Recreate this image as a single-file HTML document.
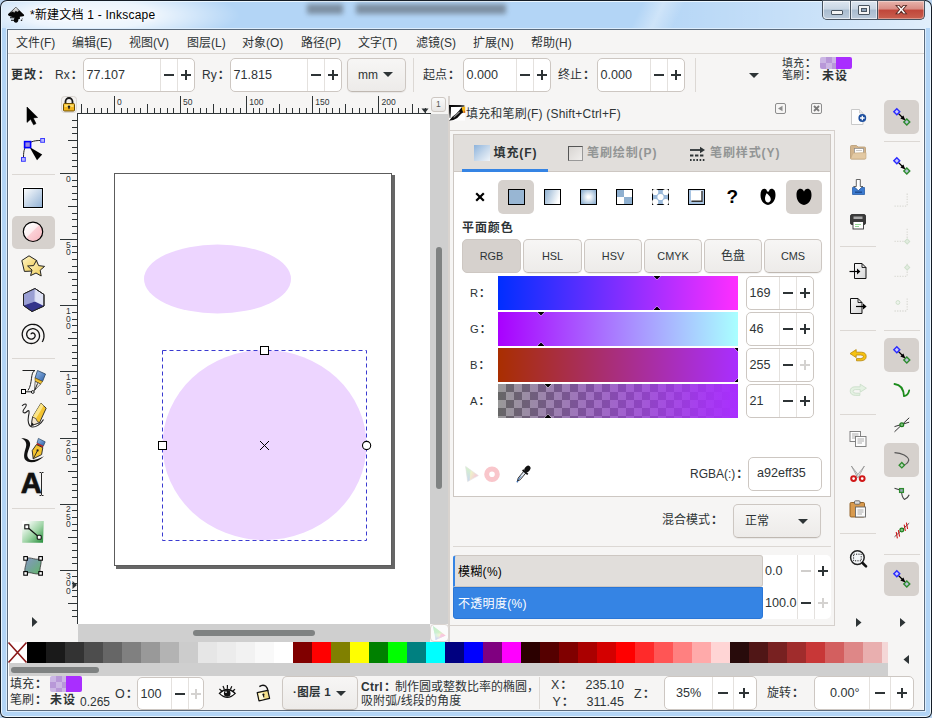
<!DOCTYPE html><html lang="zh-CN"><head><meta charset="utf-8"><title>*新建文档 1 - Inkscape</title><style>
*{box-sizing:border-box;margin:0;padding:0}
html,body{width:932px;height:718px;overflow:hidden}
body{position:relative;background:#b9d3ee;font-family:"Liberation Sans","Noto Sans CJK SC",sans-serif;font-size:12px;color:#2e3436}
.a{position:absolute}
.t{position:absolute;white-space:nowrap;line-height:1}
.b{font-weight:bold;letter-spacing:.9px}
.spin{position:absolute;background:#fff;border:1px solid #cdc7c2;border-radius:5px}
.spin i{position:absolute;top:0;bottom:0;width:1px;background:#e4e1de}
.pm{position:absolute;background:#2e3436}
.btn{position:absolute;border:1px solid #cdc7c2;border-bottom-color:#bfb8b1;border-radius:5px;background:linear-gradient(#f7f6f5,#edebe9);box-shadow:0 1px 1px rgba(0,0,0,.06)}
.act{position:absolute;background:#d6d1cd;border-radius:5px}
.sep{position:absolute;background:#dcd8d4}
svg{position:absolute;overflow:visible}
.c{font-weight:bold;letter-spacing:0;padding-left:1px;margin-right:-1px}
</style></head><body>
<div class="a" style="left:0;top:0;width:932px;height:718px;border-radius:7px 7px 6px 6px;background:#141c26"></div>
<div class="a" style="left:1px;top:1px;width:930px;height:716px;border-radius:6px 6px 5px 5px;background:#eaf6ff"></div>
<div class="a" style="left:2px;top:2px;width:928px;height:714px;border-radius:5px 5px 4px 4px;background:#b3d5f6"></div>
<div class="a" style="left:2px;top:2px;width:260px;height:26px;border-radius:5px 0 0 0;background:radial-gradient(ellipse 150px 30px at 88px 13px,rgba(255,255,255,.9) 0,rgba(255,255,255,.75) 45%,rgba(255,255,255,0) 100%)"></div>
<div class="a" style="left:307px;top:4px;width:36px;height:10px;background:#66727f;filter:blur(2.5px);opacity:.7"></div>
<div class="a" style="left:356px;top:4px;width:150px;height:10px;background:#66727f;filter:blur(2.5px);opacity:.7"></div>
<div class="a" style="left:600px;top:2px;width:130px;height:26px;background:linear-gradient(115deg,rgba(255,255,255,0) 30%,rgba(255,255,255,.35) 45%,rgba(255,255,255,0) 60%)"></div>
<div class="a" style="left:640px;top:2px;width:290px;height:26px;border-radius:0 5px 0 0;background:linear-gradient(90deg,rgba(255,255,255,0),rgba(255,255,255,.3) 60%,rgba(255,255,255,.6))"></div>
<div class="a" style="left:6px;top:28px;width:920px;height:684px;background:#dcedfd"></div>
<div class="a" style="left:7px;top:29px;width:918px;height:682px;background:#5b6b7d"></div>
<div class="a" style="left:8px;top:30px;width:916px;height:680px;background:#fff"></div>
<div class="a" style="left:9px;top:30px;width:914px;height:680px;background:#f6f5f4"></div>
<svg style="left:4px;top:4px" width="24" height="24" viewBox="4 4 24 24"><defs><linearGradient id="sn" x1="0" y1="0" x2="0" y2="1"><stop offset="0" stop-color="#fff"/><stop offset="1" stop-color="#9a9a9a"/></linearGradient></defs><path d="M15.9 7 L24 14.7 Q24.6 15.8 23.2 16.2 L19.8 16.8 L20 18.8 L18.2 19.4 Q18.8 21.8 16.2 22.7 Q13.6 22.4 13.8 20.2 L14.4 17.4 L10.4 16.4 L8.4 15.4 Q7.5 14.6 8.4 13.8 Z" fill="#050505"/><path d="M15.9 7.6 L19 10.8 L17.2 12 L15.9 10.8 L14.2 12.8 L12.8 11.6 L10 13 Z" fill="url(#sn)"/><path d="M10 17.7H14.4M11 20.3H14" stroke="#050505" stroke-width="1.1"/><circle cx="21.5" cy="20.2" r=".8" fill="#111"/><circle cx="22.3" cy="18.8" r=".5" fill="#555"/></svg>
<div class="t" style="left:30px;top:8.5px;font-size:12px;color:#000;letter-spacing:.22px;text-shadow:0 0 6px #fff,0 0 6px #fff,0 0 3px #fff">*新建文档 1 - Inkscape</div>
<div class="a" style="left:822px;top:0;width:103px;height:20px;border:1px solid #46525f;border-top:none;border-radius:0 0 5px 5px;background:#46525f"></div>
<div class="a" style="left:823px;top:1px;width:27px;height:18px;border-radius:0 0 0 4px;background:linear-gradient(#dde6f0 0,#c8d5e3 45%,#a9bccf 50%,#bccbdb 100%);box-shadow:inset 0 0 0 1px rgba(255,255,255,.6)"></div>
<div class="a" style="left:851px;top:1px;width:26px;height:18px;background:linear-gradient(#dde6f0 0,#c8d5e3 45%,#a9bccf 50%,#bccbdb 100%);box-shadow:inset 0 0 0 1px rgba(255,255,255,.6)"></div>
<div class="a" style="left:878px;top:1px;width:46px;height:18px;border-radius:0 0 4px 0;background:linear-gradient(#e8b4ac 0,#d98c84 45%,#c0463a 50%,#c9604f 100%);box-shadow:inset 0 0 0 1px rgba(255,255,255,.35)"></div>
<div class="a" style="left:831px;top:10px;width:12px;height:5px;background:#f4f4f4;border:1px solid #4a5560;border-radius:1px"></div>
<div class="a" style="left:858px;top:5px;width:12px;height:10px;background:#f4f4f4;border:1px solid #4a5560;border-radius:1px"></div>
<div class="a" style="left:861px;top:8px;width:6px;height:4px;background:#8fa3b8;border:1px solid #4a5560"></div>
<svg style="left:895px;top:5.2px" width="12.5" height="9.3" viewBox="0 0 12 11" preserveAspectRatio="none"><path d="M1 0.5 L4 0.5 L6 3.3 L8 0.5 L11 0.5 L7.6 5.4 L11 10.5 L8 10.5 L6 7.5 L4 10.5 L1 10.5 L4.4 5.4 Z" fill="#fff" stroke="#5a2a24" stroke-width="1"/></svg>
<div class="t" style="left:16px;top:36.5px;font-size:12px;">文件(F)</div>
<div class="t" style="left:72px;top:36.5px;font-size:12px;">编辑(E)</div>
<div class="t" style="left:129px;top:36.5px;font-size:12px;">视图(V)</div>
<div class="t" style="left:187px;top:36.5px;font-size:12px;">图层(L)</div>
<div class="t" style="left:242px;top:36.5px;font-size:12px;">对象(O)</div>
<div class="t" style="left:301px;top:36.5px;font-size:12px;">路径(P)</div>
<div class="t" style="left:358px;top:36.5px;font-size:12px;">文字(T)</div>
<div class="t" style="left:416px;top:36.5px;font-size:12px;">滤镜(S)</div>
<div class="t" style="left:473px;top:36.5px;font-size:12px;">扩展(N)</div>
<div class="t" style="left:531px;top:36.5px;font-size:12px;">帮助(H)</div>
<div class="a" style="left:8px;top:53px;width:916px;height:1px;background:#dcd8d4"></div>
<div class="t b" style="left:11px;top:68.5px;font-size:12px;">更改<span class="c">：</span></div>
<div class="t" style="left:55px;top:68.5px;font-size:12px;">Rx<span class="c">：</span></div>
<div class="spin" style="left:83px;top:58px;width:112px;height:34px"><i style="left:76px"></i><i style="left:93px"></i></div>
<div class="t" style="left:86.5px;top:69.2px;font-size:12.6px;">77.107</div>
<div class="pm" style="left:164.0px;top:74.0px;width:10px;height:2px;background:#2e3436"></div>
<div class="pm" style="left:181.0px;top:74.0px;width:10px;height:2px;background:#2e3436"></div>
<div class="pm" style="left:185.0px;top:70.0px;width:2px;height:10px;background:#2e3436"></div>
<div class="t" style="left:202px;top:68.5px;font-size:12px;">Ry<span class="c">：</span></div>
<div class="spin" style="left:230px;top:58px;width:112px;height:34px"><i style="left:76px"></i><i style="left:93px"></i></div>
<div class="t" style="left:233.5px;top:69.2px;font-size:12.6px;">71.815</div>
<div class="pm" style="left:311.0px;top:74.0px;width:10px;height:2px;background:#2e3436"></div>
<div class="pm" style="left:328.0px;top:74.0px;width:10px;height:2px;background:#2e3436"></div>
<div class="pm" style="left:332.0px;top:70.0px;width:2px;height:10px;background:#2e3436"></div>
<div class="btn" style="left:346.5px;top:58px;width:59.5px;height:34px;"></div>
<div class="t" style="left:358px;top:68.5px;font-size:12px;">mm</div>
<svg style="left:383px;top:72px" width="10" height="5"><path d="M0 0H10L5 5Z" fill="#2e3436"/></svg>
<div class="a" style="left:413px;top:58px;width:1px;height:34px;background:#dcd8d4"></div>
<div class="t" style="left:423px;top:68.5px;font-size:12px;">起点<span class="c">：</span></div>
<div class="spin" style="left:463px;top:58px;width:88px;height:34px"><i style="left:52px"></i><i style="left:69px"></i></div>
<div class="t" style="left:466.5px;top:69.2px;font-size:12.6px;">0.000</div>
<div class="pm" style="left:520.0px;top:74.0px;width:10px;height:2px;background:#2e3436"></div>
<div class="pm" style="left:537.0px;top:74.0px;width:10px;height:2px;background:#2e3436"></div>
<div class="pm" style="left:541.0px;top:70.0px;width:2px;height:10px;background:#2e3436"></div>
<div class="t" style="left:558px;top:68.5px;font-size:12px;">终止<span class="c">：</span></div>
<div class="spin" style="left:597px;top:58px;width:88px;height:34px"><i style="left:52px"></i><i style="left:69px"></i></div>
<div class="t" style="left:600.5px;top:69.2px;font-size:12.6px;">0.000</div>
<div class="pm" style="left:654.0px;top:74.0px;width:10px;height:2px;background:#2e3436"></div>
<div class="pm" style="left:671.0px;top:74.0px;width:10px;height:2px;background:#2e3436"></div>
<div class="pm" style="left:675.0px;top:70.0px;width:2px;height:10px;background:#2e3436"></div>
<div class="a" style="left:695px;top:58px;width:1px;height:34px;background:#dcd8d4"></div>
<svg style="left:749px;top:73px" width="10" height="5"><path d="M0 0H10L5 5Z" fill="#2e3436"/></svg>
<div class="t" style="left:782px;top:58px;font-size:11px;">填充<span class="c">：</span></div>
<div class="t" style="left:782px;top:70px;font-size:11px;">笔刷<span class="c">：</span></div>
<div class="t b" style="left:822px;top:69.5px;font-size:12px;">未设</div>
<div class="a" style="left:820px;top:57px;width:16px;height:12px;background-color:#cbb6e4;background-image:linear-gradient(45deg,#b898d8 25%,transparent 25%,transparent 75%,#b898d8 75%),linear-gradient(45deg,#b898d8 25%,transparent 25%,transparent 75%,#b898d8 75%);background-size:12px 12px;background-position:0 0,6px 6px;border-radius:2px 0 0 2px"></div>
<div class="a" style="left:836px;top:57px;width:16px;height:12px;background:#a92eff;border-radius:0 2px 2px 0"></div>
<div class="act" style="left:12px;top:216px;width:43px;height:33px;"></div>
<div class="a" style="left:12px;top:174px;width:43px;height:1px;background:#dcd8d4"></div>
<div class="a" style="left:12px;top:358px;width:43px;height:1px;background:#dcd8d4"></div>
<div class="a" style="left:12px;top:508px;width:43px;height:1px;background:#dcd8d4"></div>
<svg style="left:32px;top:617px" width="6" height="10"><path d="M0 0V10L5.5 5Z" fill="#2e3436"/></svg>
<svg style="left:20px;top:100px" width="26" height="30" viewBox="20 100 26 30"><path d="M27 107V122.4L30.6 119.2L33.6 124.8L36 123.6L33.2 118L37.6 117.4Z" fill="#000" stroke="#000" stroke-width=".6" stroke-linejoin="round"/></svg>
<svg style="left:18px;top:134px" width="30" height="32" viewBox="18 134 30 32"><path d="M23.5 157C23.5 150 25 146.5 27.5 144.5C31 141 36 140.5 40.5 140.5" fill="none" stroke="#222" stroke-width="1"/><path d="M29.5 147L42.2 154.4L37 160.2Z" fill="#000"/><rect x="24.6" y="141.6" width="6" height="6" fill="#9a8ae0" stroke="#0000ff" stroke-width="1.6"/><rect x="40.7" y="138.5" width="3.8" height="3.8" fill="#b8b8ff" stroke="#3c3cff" stroke-width="1"/><rect x="21.5" y="157.5" width="3.8" height="3.8" fill="#b8b8ff" stroke="#3c3cff" stroke-width="1"/></svg>
<svg style="left:20px;top:185px" width="26" height="26" viewBox="20 185 26 26"><defs><linearGradient id="tg1" x1="0" y1="0" x2="1" y2="1"><stop offset="0" stop-color="#ffffff"/><stop offset="1" stop-color="#8fb0d4"/></linearGradient></defs><rect x="22.5" y="187.5" width="21" height="21" fill="none" stroke="#fff" stroke-width="1"/><rect x="23.5" y="188.5" width="19" height="19" fill="url(#tg1)" stroke="#000" stroke-width="1"/></svg>
<svg style="left:20px;top:219px" width="26" height="26" viewBox="20 219 26 26"><defs><linearGradient id="tg2" x1="0.15" y1="0.15" x2="0.85" y2="0.85"><stop offset="0" stop-color="#ffffff"/><stop offset=".45" stop-color="#fdeef0"/><stop offset=".5" stop-color="#fbd0d6"/><stop offset="1" stop-color="#f7bcc4"/></linearGradient></defs><circle cx="33" cy="231.8" r="9.7" fill="url(#tg2)" stroke="#000" stroke-width="1.2"/></svg>
<svg style="left:19px;top:253px" width="28" height="26" viewBox="19 253 28 26"><defs><linearGradient id="tg3" x1="0" y1="0" x2="1" y2="1"><stop offset="0" stop-color="#fff8d0"/><stop offset="1" stop-color="#efc94a"/></linearGradient></defs><path d="M21.8 260.5L29 255.8L36.8 260.6L33.6 271L24.4 271.4Z" fill="url(#tg3)" stroke="#222" stroke-width="1"/><path d="M36.4 260.4L38.6 265.6L44.6 266.4L40.2 270.2L41.2 276L36 273L30.6 275.6L32 270L27.6 266L33.6 265.6Z" fill="url(#tg3)" stroke="#222" stroke-width="1"/></svg>
<svg style="left:20px;top:285px" width="28" height="30" viewBox="20 285 28 30"><path d="M23.5 294L35 288.5L44 294.5V306L32 311.5L23.5 305.5Z" fill="#dfe2f6" stroke="#222" stroke-width="1"/><path d="M23.5 294L35 288.5L34.8 301.5L23.5 305.5Z" fill="#9a9fd4"/><path d="M23.5 305.5L34.8 301.5L44 306L32 311.5Z" fill="#34348c"/><path d="M35 288.5L34.8 301.5" stroke="#c8cbe8" stroke-width=".8"/><path d="M23.5 294L35 288.5L44 294.5V306L32 311.5L23.5 305.5Z" fill="none" stroke="#222" stroke-width="1"/></svg>
<svg style="left:18px;top:320px" width="30" height="30" viewBox="18 320 30 30"><path d="M31.0 334.3L31.0 334.2L31.1 334.0L31.2 333.8L31.3 333.6L31.5 333.4L31.7 333.3L31.9 333.2L32.1 333.1L32.4 333.0L32.7 333.0L33.0 333.1L33.3 333.1L33.6 333.2L33.9 333.4L34.2 333.6L34.4 333.9L34.6 334.2L34.8 334.5L35.0 334.8L35.1 335.2L35.1 335.6L35.1 336.1L35.0 336.5L34.8 336.9L34.6 337.3L34.4 337.7L34.0 338.1L33.6 338.4L33.2 338.6L32.7 338.9L32.2 339.0L31.7 339.1L31.1 339.1L30.5 339.0L30.0 338.9L29.4 338.7L28.9 338.4L28.4 338.0L27.9 337.6L27.6 337.1L27.2 336.5L27.0 335.9L26.8 335.3L26.7 334.6L26.7 333.9L26.8 333.2L27.0 332.5L27.3 331.9L27.7 331.2L28.2 330.6L28.7 330.1L29.4 329.7L30.1 329.3L30.8 329.0L31.7 328.8L32.5 328.7L33.3 328.7L34.2 328.9L35.0 329.1L35.8 329.5L36.6 330.0L37.3 330.5L37.9 331.2L38.5 332.0L38.9 332.8L39.2 333.7L39.4 334.6L39.5 335.6L39.5 336.5L39.3 337.5L39.0 338.5L38.5 339.4L38.0 340.2L37.3 341.0L36.5 341.7L35.6 342.3L34.6 342.8L33.6 343.2L32.5 343.4L31.3 343.5L30.2 343.4L29.1 343.2L28.0 342.8L26.9 342.3L25.9 341.7L25.0 340.9L24.2 340.0L23.5 339.0L23.0 337.9L22.6 336.7L22.3 335.5L22.2 334.3L22.3 333.0L22.6 331.8L23.0 330.5L23.6 329.4L24.4 328.3L25.3 327.3L26.3 326.4L27.4 325.7L28.7 325.1L30.0 324.7L31.4 324.4L32.8 324.3L34.3 324.5L35.7 324.7L37.1 325.2L38.4 325.9L39.6 326.7L40.7 327.7L41.7 328.8L42.5 330.1L43.2 331.4L43.6 332.9L43.9 334.4L44.0 335.9L43.9 337.4L43.5 339.0L43.0 340.5L42.2 341.9" fill="none" stroke="#111" stroke-width="1.3"/></svg>
<svg style="left:18px;top:366px" width="30" height="30" viewBox="18 366 30 30"><defs><linearGradient id="tg4" x1="0" y1="0" x2="1" y2="1"><stop offset="0" stop-color="#9cc0ea"/><stop offset="1" stop-color="#2d5fa8"/></linearGradient></defs><path d="M22.5 370.5H35C30 372 33 383 28 390.5" fill="none" stroke="#222" stroke-width="1"/><path d="M24.5 391.8H32" stroke="#222" stroke-width="1"/><rect x="21.5" y="389.5" width="4" height="4" fill="#fff" stroke="#000" stroke-width="1"/><circle cx="32.8" cy="392" r="1.4" fill="#fff" stroke="#000" stroke-width=".9"/><path d="M37.5 370.5L45.5 374L42.5 381.5L35 378Z" fill="url(#tg4)" stroke="#27425f" stroke-width=".8"/><path d="M35 378L42.5 381.5L40.6 384L35.2 381.4Z" fill="#f1c232" stroke="#6b4c00" stroke-width=".6"/><path d="M35.2 381.4L40.6 384L34.4 390.6Z" fill="#f7f3ea" stroke="#333" stroke-width=".7"/><path d="M37.6 383.4L34.6 390.4" stroke="#222" stroke-width="1"/></svg>
<svg style="left:18px;top:400px" width="30" height="30" viewBox="18 400 30 30"><path d="M22 405.8C25.5 402.5 28 404 24.5 408.5C21 413 24.5 414 27 411.5C29.5 409 29.5 412 28.5 416C27.5 421 28.5 426.5 32 427C36 427.5 41 424 43.5 419.5" fill="none" stroke="#222" stroke-width="1.1"/><path d="M41 403.2L46.2 408.2L39.6 422.6L31.4 425.6L32.6 417Z" fill="#f4c430" stroke="#222" stroke-width=".9"/><path d="M41 403.2L43.6 405.7L35.6 419.2L32.6 417Z" fill="#fbe58a"/><path d="M32.6 417L35.8 418.6L37.4 421.6L39.6 422.6L31.4 425.6Z" fill="#f3e6cf" stroke="#222" stroke-width=".7"/><path d="M31.4 425.6L32 422.6L34 424.6Z" fill="#111"/></svg>
<svg style="left:18px;top:434px" width="30" height="30" viewBox="18 434 30 30"><defs><linearGradient id="tg5" x1="0" y1="0" x2="1" y2="1"><stop offset="0" stop-color="#9cc0ea"/><stop offset="1" stop-color="#2d5fa8"/></linearGradient></defs><path d="M21.2 438.2C27 438 31 440.5 30 445.5C29 450.5 25.5 454.5 28.5 458.5C31 461.5 37 460 44 456.2C39 461.5 32 463.5 27.5 461.5C22 459 24.5 452 26 447C27 443 25.5 440 21.2 438.2Z" fill="#111"/><path d="M38.4 438.4L45.2 441.8L43.4 446L37 443Z" fill="url(#tg5)" stroke="#27425f" stroke-width=".7"/><path d="M37 443L43.4 446L42.8 447.6L36.4 444.6Z" fill="#c81e1e"/><path d="M36.4 444.6L42.8 447.6L41.6 454.6L33.2 458.8L32.2 450.6Z" fill="#f4c430" stroke="#222" stroke-width=".9"/><path d="M33.2 458.8L37.4 450.8" stroke="#222" stroke-width=".9"/><circle cx="37.6" cy="450.4" r="1.1" fill="#222"/></svg>
<div class="t b" style="left:20.8px;top:469.2px;font-size:29px;letter-spacing:0;color:#111;font-family:'Liberation Sans',sans-serif;-webkit-text-stroke:.5px #111;text-shadow:0 0 1.5px #666;transform:scaleX(1.0);transform-origin:0 0">A</div>
<svg style="left:38px;top:470px" width="8" height="28" viewBox="38 470 8 28"><path d="M39.5 472.5H41L41.5 473.5L42 472.5H43.5M41.5 473.5V494.5M39.5 495.5H41L41.5 494.5L42 495.5H43.5" fill="none" stroke="#111" stroke-width=".9"/></svg>
<svg style="left:20px;top:519px" width="26" height="26" viewBox="20 519 26 26"><defs><linearGradient id="tg6" x1="0.1" y1="0.1" x2="1" y2="1"><stop offset="0" stop-color="#ffffff"/><stop offset=".5" stop-color="#9fd4a6"/><stop offset="1" stop-color="#1f8a35"/></linearGradient></defs><path d="M22.2 521H43.8L43 542.8H22.2Z" fill="url(#tg6)"/><path d="M26.8 526.8L39.2 537.2" stroke="#111" stroke-width="1.2"/><rect x="24.8" y="524.8" width="4" height="4" fill="#fff" stroke="#111" stroke-width="1.1"/><rect x="37.2" y="535.2" width="4" height="4" rx="1" fill="#fff" stroke="#111" stroke-width="1.1"/></svg>
<svg style="left:20px;top:553px" width="26" height="26" viewBox="20 553 26 26"><defs><linearGradient id="tg7" x1="0" y1="0" x2="1" y2="1"><stop offset="0" stop-color="#8898c4"/><stop offset=".5" stop-color="#74a39a"/><stop offset="1" stop-color="#62b866"/></linearGradient></defs><path d="M25.6 558.4C31 556.5 36 561 40.6 558.4C42.5 564 38.5 568 40.6 573.4C35 575.5 31 571 25.6 573.4C23 568 28 563.5 25.6 558.4Z" fill="url(#tg7)" stroke="#333" stroke-width=".8"/><rect x="23.8" y="556.6" width="3.6" height="3.6" fill="#fff" stroke="#000" stroke-width="1.1"/><rect x="38.8" y="556.6" width="3.6" height="3.6" fill="#fff" stroke="#000" stroke-width="1.1"/><rect x="23.8" y="571.6" width="3.6" height="3.6" fill="#fff" stroke="#000" stroke-width="1.1"/><rect x="38.8" y="571.6" width="3.6" height="3.6" fill="#fff" stroke="#000" stroke-width="1.1"/></svg>
<svg style="left:60px;top:95px" width="372" height="19" viewBox="60 95 372 19"><rect x="77" y="113" width="354" height="1" fill="#2e3436"/><rect x="81" y="104" width="1" height="9" fill="#2e3436"/><rect x="87" y="108" width="1" height="5" fill="#2e3436"/><rect x="94" y="108" width="1" height="5" fill="#2e3436"/><rect x="101" y="108" width="1" height="5" fill="#2e3436"/><rect x="107" y="108" width="1" height="5" fill="#2e3436"/><rect x="114" y="96" width="1" height="17" fill="#2e3436"/><text x="116.9" y="105" font-size="8.5" fill="#2e3436">0</text><rect x="121" y="108" width="1" height="5" fill="#2e3436"/><rect x="127" y="108" width="1" height="5" fill="#2e3436"/><rect x="134" y="108" width="1" height="5" fill="#2e3436"/><rect x="140" y="108" width="1" height="5" fill="#2e3436"/><rect x="147" y="104" width="1" height="9" fill="#2e3436"/><rect x="154" y="108" width="1" height="5" fill="#2e3436"/><rect x="160" y="108" width="1" height="5" fill="#2e3436"/><rect x="167" y="108" width="1" height="5" fill="#2e3436"/><rect x="173" y="108" width="1" height="5" fill="#2e3436"/><rect x="180" y="96" width="1" height="17" fill="#2e3436"/><text x="183.0" y="105" font-size="8.5" fill="#2e3436">50</text><rect x="187" y="108" width="1" height="5" fill="#2e3436"/><rect x="193" y="108" width="1" height="5" fill="#2e3436"/><rect x="200" y="108" width="1" height="5" fill="#2e3436"/><rect x="206" y="108" width="1" height="5" fill="#2e3436"/><rect x="213" y="104" width="1" height="9" fill="#2e3436"/><rect x="220" y="108" width="1" height="5" fill="#2e3436"/><rect x="226" y="108" width="1" height="5" fill="#2e3436"/><rect x="233" y="108" width="1" height="5" fill="#2e3436"/><rect x="240" y="108" width="1" height="5" fill="#2e3436"/><rect x="246" y="96" width="1" height="17" fill="#2e3436"/><text x="249.2" y="105" font-size="8.5" fill="#2e3436">100</text><rect x="253" y="108" width="1" height="5" fill="#2e3436"/><rect x="259" y="108" width="1" height="5" fill="#2e3436"/><rect x="266" y="108" width="1" height="5" fill="#2e3436"/><rect x="273" y="108" width="1" height="5" fill="#2e3436"/><rect x="279" y="104" width="1" height="9" fill="#2e3436"/><rect x="286" y="108" width="1" height="5" fill="#2e3436"/><rect x="292" y="108" width="1" height="5" fill="#2e3436"/><rect x="299" y="108" width="1" height="5" fill="#2e3436"/><rect x="306" y="108" width="1" height="5" fill="#2e3436"/><rect x="312" y="96" width="1" height="17" fill="#2e3436"/><text x="315.3" y="105" font-size="8.5" fill="#2e3436">150</text><rect x="319" y="108" width="1" height="5" fill="#2e3436"/><rect x="326" y="108" width="1" height="5" fill="#2e3436"/><rect x="332" y="108" width="1" height="5" fill="#2e3436"/><rect x="339" y="108" width="1" height="5" fill="#2e3436"/><rect x="345" y="104" width="1" height="9" fill="#2e3436"/><rect x="352" y="108" width="1" height="5" fill="#2e3436"/><rect x="359" y="108" width="1" height="5" fill="#2e3436"/><rect x="365" y="108" width="1" height="5" fill="#2e3436"/><rect x="372" y="108" width="1" height="5" fill="#2e3436"/><rect x="378" y="96" width="1" height="17" fill="#2e3436"/><text x="381.5" y="105" font-size="8.5" fill="#2e3436">200</text><rect x="385" y="108" width="1" height="5" fill="#2e3436"/><rect x="392" y="108" width="1" height="5" fill="#2e3436"/><rect x="398" y="108" width="1" height="5" fill="#2e3436"/><rect x="405" y="108" width="1" height="5" fill="#2e3436"/><rect x="412" y="104" width="1" height="9" fill="#2e3436"/><rect x="418" y="108" width="1" height="5" fill="#2e3436"/><rect x="425" y="108" width="1" height="5" fill="#2e3436"/><path d="M421.5 108.5H428.5L425 113Z" fill="#2e3436"/></svg>
<svg style="left:58px;top:113px" width="21" height="512" viewBox="58 113 21 512"><rect x="77" y="113" width="1" height="511" fill="#2e3436"/><rect x="72" y="120" width="5" height="1" fill="#2e3436"/><rect x="72" y="127" width="5" height="1" fill="#2e3436"/><rect x="72" y="133" width="5" height="1" fill="#2e3436"/><rect x="68" y="140" width="9" height="1" fill="#2e3436"/><rect x="72" y="147" width="5" height="1" fill="#2e3436"/><rect x="72" y="153" width="5" height="1" fill="#2e3436"/><rect x="72" y="160" width="5" height="1" fill="#2e3436"/><rect x="72" y="166" width="5" height="1" fill="#2e3436"/><rect x="60" y="173" width="17" height="1" fill="#2e3436"/><text x="66" y="181.7" font-size="8.5" fill="#2e3436">0</text><rect x="72" y="180" width="5" height="1" fill="#2e3436"/><rect x="72" y="186" width="5" height="1" fill="#2e3436"/><rect x="72" y="193" width="5" height="1" fill="#2e3436"/><rect x="72" y="199" width="5" height="1" fill="#2e3436"/><rect x="68" y="206" width="9" height="1" fill="#2e3436"/><rect x="72" y="213" width="5" height="1" fill="#2e3436"/><rect x="72" y="219" width="5" height="1" fill="#2e3436"/><rect x="72" y="226" width="5" height="1" fill="#2e3436"/><rect x="72" y="233" width="5" height="1" fill="#2e3436"/><rect x="60" y="239" width="17" height="1" fill="#2e3436"/><text x="66" y="247.8" font-size="8.5" fill="#2e3436">5</text><text x="66" y="255.3" font-size="8.5" fill="#2e3436">0</text><rect x="72" y="246" width="5" height="1" fill="#2e3436"/><rect x="72" y="252" width="5" height="1" fill="#2e3436"/><rect x="72" y="259" width="5" height="1" fill="#2e3436"/><rect x="72" y="266" width="5" height="1" fill="#2e3436"/><rect x="68" y="272" width="9" height="1" fill="#2e3436"/><rect x="72" y="279" width="5" height="1" fill="#2e3436"/><rect x="72" y="285" width="5" height="1" fill="#2e3436"/><rect x="72" y="292" width="5" height="1" fill="#2e3436"/><rect x="72" y="299" width="5" height="1" fill="#2e3436"/><rect x="60" y="305" width="17" height="1" fill="#2e3436"/><text x="66" y="314.0" font-size="8.5" fill="#2e3436">1</text><text x="66" y="321.5" font-size="8.5" fill="#2e3436">0</text><text x="66" y="329.0" font-size="8.5" fill="#2e3436">0</text><rect x="72" y="312" width="5" height="1" fill="#2e3436"/><rect x="72" y="319" width="5" height="1" fill="#2e3436"/><rect x="72" y="325" width="5" height="1" fill="#2e3436"/><rect x="72" y="332" width="5" height="1" fill="#2e3436"/><rect x="68" y="338" width="9" height="1" fill="#2e3436"/><rect x="72" y="345" width="5" height="1" fill="#2e3436"/><rect x="72" y="352" width="5" height="1" fill="#2e3436"/><rect x="72" y="358" width="5" height="1" fill="#2e3436"/><rect x="72" y="365" width="5" height="1" fill="#2e3436"/><rect x="60" y="371" width="17" height="1" fill="#2e3436"/><text x="66" y="380.1" font-size="8.5" fill="#2e3436">1</text><text x="66" y="387.6" font-size="8.5" fill="#2e3436">5</text><text x="66" y="395.1" font-size="8.5" fill="#2e3436">0</text><rect x="72" y="378" width="5" height="1" fill="#2e3436"/><rect x="72" y="385" width="5" height="1" fill="#2e3436"/><rect x="72" y="391" width="5" height="1" fill="#2e3436"/><rect x="72" y="398" width="5" height="1" fill="#2e3436"/><rect x="68" y="404" width="9" height="1" fill="#2e3436"/><rect x="72" y="411" width="5" height="1" fill="#2e3436"/><rect x="72" y="418" width="5" height="1" fill="#2e3436"/><rect x="72" y="424" width="5" height="1" fill="#2e3436"/><rect x="72" y="431" width="5" height="1" fill="#2e3436"/><rect x="60" y="438" width="17" height="1" fill="#2e3436"/><text x="66" y="446.3" font-size="8.5" fill="#2e3436">2</text><text x="66" y="453.8" font-size="8.5" fill="#2e3436">0</text><text x="66" y="461.3" font-size="8.5" fill="#2e3436">0</text><rect x="72" y="444" width="5" height="1" fill="#2e3436"/><rect x="72" y="451" width="5" height="1" fill="#2e3436"/><rect x="72" y="457" width="5" height="1" fill="#2e3436"/><rect x="72" y="464" width="5" height="1" fill="#2e3436"/><rect x="68" y="471" width="9" height="1" fill="#2e3436"/><rect x="72" y="477" width="5" height="1" fill="#2e3436"/><rect x="72" y="484" width="5" height="1" fill="#2e3436"/><rect x="72" y="490" width="5" height="1" fill="#2e3436"/><rect x="72" y="497" width="5" height="1" fill="#2e3436"/><rect x="60" y="504" width="17" height="1" fill="#2e3436"/><text x="66" y="512.4" font-size="8.5" fill="#2e3436">2</text><text x="66" y="519.9" font-size="8.5" fill="#2e3436">5</text><text x="66" y="527.4" font-size="8.5" fill="#2e3436">0</text><rect x="72" y="510" width="5" height="1" fill="#2e3436"/><rect x="72" y="517" width="5" height="1" fill="#2e3436"/><rect x="72" y="524" width="5" height="1" fill="#2e3436"/><rect x="72" y="530" width="5" height="1" fill="#2e3436"/><rect x="68" y="537" width="9" height="1" fill="#2e3436"/><rect x="72" y="543" width="5" height="1" fill="#2e3436"/><rect x="72" y="550" width="5" height="1" fill="#2e3436"/><rect x="72" y="557" width="5" height="1" fill="#2e3436"/><rect x="72" y="563" width="5" height="1" fill="#2e3436"/><rect x="60" y="570" width="17" height="1" fill="#2e3436"/><text x="66" y="578.5" font-size="8.5" fill="#2e3436">3</text><text x="66" y="586.0" font-size="8.5" fill="#2e3436">0</text><text x="66" y="593.5" font-size="8.5" fill="#2e3436">0</text><rect x="72" y="576" width="5" height="1" fill="#2e3436"/><rect x="72" y="583" width="5" height="1" fill="#2e3436"/><rect x="72" y="590" width="5" height="1" fill="#2e3436"/><rect x="72" y="596" width="5" height="1" fill="#2e3436"/><rect x="68" y="603" width="9" height="1" fill="#2e3436"/><rect x="72" y="610" width="5" height="1" fill="#2e3436"/><rect x="72" y="616" width="5" height="1" fill="#2e3436"/><path d="M72.5 581L77 585L72.5 589Z" fill="#2e3436"/></svg>
<svg style="left:61px;top:96px" width="16" height="17" viewBox="0 0 16 17"><rect x="0.5" y="0.5" width="15" height="16" rx="3" fill="#f3f1ef" stroke="#d9d5d1"/><path d="M4.5 8V5.5a3.5 3.5 0 0 1 7 0V8" fill="none" stroke="#1a1a1a" stroke-width="1.8"/><rect x="2.5" y="7.5" width="11" height="7.5" rx="1" fill="#f3b51c" stroke="#6b4c00"/><rect x="3.5" y="8.5" width="9" height="2.5" fill="#fbdc6a"/><circle cx="8" cy="10.6" r="1.2" fill="#1a1a1a"/><rect x="7.4" y="10.6" width="1.2" height="2.6" fill="#1a1a1a"/></svg>
<div class="a" style="left:78px;top:114px;width:352px;height:510px;background:#fff"></div>
<div class="a" style="left:116px;top:175px;width:279px;height:394px;background:#666"></div>
<div class="a" style="left:114px;top:173px;width:278px;height:393px;background:#fff;border:1px solid #5c5c5c"></div>
<svg style="left:78px;top:114px" width="352" height="510" viewBox="78 114 352 510"><ellipse cx="217.5" cy="279" rx="73.5" ry="34.5" fill="#edd5ff"/><ellipse cx="264.5" cy="445" rx="102" ry="95" fill="#edd5ff"/><rect x="162.5" y="350.5" width="204" height="190" fill="none" stroke="#3a3ad0" stroke-width="1" stroke-dasharray="4 3"/><rect x="260.5" y="346.5" width="8" height="8" fill="#fff" stroke="#000" stroke-width="1"/><rect x="158.5" y="441.5" width="8" height="8" fill="#fff" stroke="#000" stroke-width="1"/><circle cx="366.6" cy="445.5" r="4.1" fill="#fff" stroke="#000" stroke-width="1.1"/><path d="M260 441L269 450M269 441L260 450" stroke="#000" stroke-width="1" fill="none"/></svg>
<div class="a" style="left:430px;top:114px;width:18px;height:510px;background:#cfcfcf"></div>
<div class="a" style="left:436px;top:247px;width:6px;height:242px;background:#7f8282;border-radius:3px"></div>
<div class="a" style="left:78px;top:624px;width:352px;height:18px;background:#cfcfcf"></div>
<div class="a" style="left:193px;top:630px;width:122px;height:6px;background:#7f8282;border-radius:3px"></div>
<div class="a" style="left:448px;top:96px;width:2px;height:546px;background:#d8d3cf"></div>
<div class="a" style="left:431px;top:97px;width:15px;height:15px;border:1px solid #cdc7c2;border-radius:3px;background:linear-gradient(#fafafa,#e8e6e4)"></div>
<div class="t" style="left:436px;top:100px;font-size:8.5px;color:#555;">1</div>
<div class="a" style="left:430px;top:624px;width:18.5px;height:18px;border:1px solid #dad4d0;border-radius:4px;background:#fbfbfb"></div>
<svg style="left:430px;top:624px" width="19" height="18" viewBox="430 624 19 18"><defs><linearGradient id="ca" x1="0" y1="0" x2="1" y2="0"><stop offset="0" stop-color="#c4ecf0"/><stop offset=".55" stop-color="#f4f4d0"/><stop offset="1" stop-color="#fcc0c4"/></linearGradient><linearGradient id="cb" x1="0" y1="0" x2="0" y2="1"><stop offset="0" stop-color="#c8f0c8"/><stop offset=".45" stop-color="#c8f0c8" stop-opacity=".8"/><stop offset=".6" stop-color="#c8f0c8" stop-opacity="0"/><stop offset=".7" stop-color="#d0c8fc" stop-opacity="0"/><stop offset="1" stop-color="#c8d0fc" stop-opacity=".95"/></linearGradient></defs><path d="M433 626L445.6 635.5L435.6 640Z" fill="url(#ca)"/><path d="M433 626L445.6 635.5L435.6 640Z" fill="url(#cb)"/><path d="M439 638.4L445.6 635.5L441 633.6Z" fill="#f8c0e8" opacity=".7"/></svg>
<svg style="left:448px;top:104px" width="19" height="18" viewBox="448 104 19 18"><defs><linearGradient id="pt1" x1="0" y1="0" x2="1" y2="0"><stop offset="0" stop-color="#000"/><stop offset=".7" stop-color="#222"/><stop offset="1" stop-color="#777"/></linearGradient><linearGradient id="pt2" x1="0" y1="0" x2="0" y2="1"><stop offset="0" stop-color="#000"/><stop offset=".6" stop-color="#444"/><stop offset="1" stop-color="#bbb"/></linearGradient></defs><rect x="449" y="105" width="16" height="15.5" fill="#fff"/><rect x="449" y="105" width="15.5" height="2" fill="url(#pt1)"/><rect x="449" y="105" width="2" height="13" fill="url(#pt2)"/><path d="M449 120.8L452.6 116.4Q456 114.4 459.2 110.4L461.6 107.2L464.6 111.6L461.2 113.8Q458 118.4 453.4 120Z" fill="#0a0a0a"/><path d="M453.6 117.4L459.6 111.8" stroke="#9a9a9a" stroke-width="1.1"/><path d="M461.8 107.2L465.2 106.4V113L463.2 112.6Q462 110.4 461.8 107.2Z" fill="#f6b818"/><path d="M463 112.4L465.2 113L465 110Z" fill="#d9641a"/></svg>
<div class="t" style="left:466px;top:107.5px;font-size:12px;letter-spacing:.18px">填充和笔刷(F) (Shift+Ctrl+F)</div>
<div class="a" style="left:775px;top:103px;width:11px;height:11px;border:1px solid #8d8d8d;border-radius:2px;background:#f6f5f4"></div>
<div class="a" style="left:811px;top:103px;width:11px;height:11px;border:1px solid #8d8d8d;border-radius:2px;background:#f6f5f4"></div>
<svg style="left:777px;top:105px" width="7" height="7"><path d="M5.5 0.8V6.2L1 3.5Z" fill="#8d8d8d"/></svg>
<svg style="left:813px;top:105px" width="7" height="7"><path d="M1 1L6 6M6 1L1 6" stroke="#7a7a7a" stroke-width="1.8"/></svg>
<div class="a" style="left:450px;top:130px;width:385px;height:496px;border:1px solid #d5d0cc;border-left:none;background:#f6f5f4"></div>
<div class="a" style="left:453px;top:134px;width:378px;height:363px;border:1px solid #cdc7c2;background:#fff"></div>
<div class="a" style="left:454px;top:135px;width:376px;height:37px;background:#e1dedb;border-bottom:1px solid #cdc7c2"></div>
<div class="a" style="left:462px;top:169px;width:86px;height:3px;background:#3584e4"></div>
<div class="a" style="left:474px;top:145px;width:16px;height:16px;background:linear-gradient(135deg,#8db3dc 0,#c3d6ea 50%,#f0f5fa 100%)"></div>
<div class="t b" style="left:493.5px;top:147.0px;font-size:12px;">填充(F)</div>
<div class="a" style="left:568px;top:146px;width:15px;height:15px;border:1px solid #555;background:linear-gradient(135deg,#d8d5d2,#f0eeec);border-right-color:#999;border-bottom-color:#999"></div>
<div class="t b" style="left:587px;top:147.0px;font-size:12px;color:#929595;">笔刷绘制(P)</div>
<svg style="left:690px;top:146px" width="16" height="16" viewBox="0 0 16 16"><path d="M0 4H11" stroke="#2e3436" stroke-width="1.8" fill="none"/><path d="M10 0.8L15 4L10 7.2Z" fill="#2e3436"/><path d="M0 9.5H15" stroke="#2e3436" stroke-width="1.8" stroke-dasharray="3.4 1.6"/><path d="M0 14H15" stroke="#2e3436" stroke-width="1.8" stroke-dasharray="1.6 1.6"/></svg>
<div class="t b" style="left:710px;top:147.0px;font-size:12px;color:#929595;">笔刷样式(Y)</div>
<div class="act" style="left:498px;top:180px;width:36px;height:34px;"></div>
<div class="act" style="left:786px;top:180px;width:36px;height:34px;"></div>
<svg style="left:475px;top:192px" width="10" height="10"><path d="M1.2 1.2L8.8 8.8M8.8 1.2L1.2 8.8" stroke="#000" stroke-width="2.2"/></svg>
<div class="a" style="left:507.5px;top:189px;width:17px;height:16px;border:1px solid #000;background:#98b6d3"></div>
<div class="a" style="left:543.5px;top:189px;width:17px;height:16px;border:1px solid #000;background:linear-gradient(110deg,#8fb0d0,#ffffff 85%)"></div>
<div class="a" style="left:579.5px;top:189px;width:17px;height:16px;border:1px solid #000;background:radial-gradient(circle at 50% 50%,#ffffff 10%,#8fb0d0 90%)"></div>
<div class="a" style="left:615.5px;top:189px;width:17px;height:16px;border:1px solid #000;background:#fff"></div>
<div class="a" style="left:616.5px;top:190px;width:7px;height:7px;background:#8fb0d0"></div>
<div class="a" style="left:623.5px;top:197px;width:8px;height:7px;background:#8fb0d0"></div>
<svg style="left:651.5px;top:189px" width="17" height="16" viewBox="0 0 17 16"><rect x=".5" y=".5" width="16" height="15" fill="#9ab9da" stroke="#000"/><circle cx="3.2" cy="3" r="3.1" fill="#fff"/><circle cx="13.8" cy="3" r="3.1" fill="#fff"/><circle cx="8.5" cy="8" r="3.1" fill="#fff"/><circle cx="3.2" cy="13" r="3.1" fill="#fff"/><circle cx="13.8" cy="13" r="3.1" fill="#fff"/></svg>
<svg style="left:687.5px;top:189px" width="17" height="16" viewBox="0 0 17 16"><rect x=".5" y=".5" width="16" height="15" fill="#a8c4e2" stroke="#000"/><rect x="3" y="1.5" width="11.5" height="11" fill="#fff"/><path d="M14 2V12.2H3.4" fill="none" stroke="#333" stroke-width="1.4"/></svg>
<div class="t b" style="left:726.5px;top:187px;font-size:19px;color:#000;font-family:"Liberation Sans",sans-serif;-webkit-text-stroke:.7px #000;">?</div>
<svg style="left:760px;top:188px" width="16" height="18" viewBox="0 0 16 18"><path d="M8 17C3 16 0.5 12 0.5 7C0.5 3 2 0.8 4.5 0.8C6 0.8 7 2 7 3.5L8 3.5L9 3.5C9 2 10 0.8 11.5 0.8C14 0.8 15.5 3 15.5 7C15.5 12 13 16 8 17Z" fill="#000"/><path d="M6.6 5.2C8.4 6.6 11 9 10.8 11.6C10.6 13.6 9.2 14.6 7.8 14.4C5.8 14.2 4.8 12.2 5 10C5.2 8 6 6.4 6.6 5.2Z" fill="#fff"/></svg>
<svg style="left:796px;top:188px" width="16" height="18" viewBox="0 0 16 18"><path d="M8 17C3 16 0.5 12 0.5 7C0.5 3 2 0.8 4.5 0.8C6 0.8 7.4 2 8 3.6C8.6 2 10 0.8 11.5 0.8C14 0.8 15.5 3 15.5 7C15.5 12 13 16 8 17Z" fill="#000"/></svg>
<div class="t b" style="left:462px;top:222px;font-size:12px;">平面颜色</div>
<div class="a" style="left:462px;top:239px;width:59px;height:34px;background:#d6d1cd;border:1px solid #cdc7c2;border-radius:5px"></div>
<div class="t" style="left:462px;top:250.8px;width:59px;text-align:center;font-size:10.9px">RGB</div>
<div class="btn" style="left:523px;top:239px;width:59px;height:34px;"></div>
<div class="t" style="left:523px;top:250.8px;width:59px;text-align:center;font-size:10.9px">HSL</div>
<div class="btn" style="left:584px;top:239px;width:58px;height:34px;"></div>
<div class="t" style="left:584px;top:250.8px;width:58px;text-align:center;font-size:10.9px">HSV</div>
<div class="btn" style="left:644px;top:239px;width:58px;height:34px;"></div>
<div class="t" style="left:644px;top:250.8px;width:58px;text-align:center;font-size:10.9px">CMYK</div>
<div class="btn" style="left:704px;top:239px;width:58px;height:34px;"></div>
<div class="t" style="left:704px;top:250px;width:58px;text-align:center;font-size:12px">色盘</div>
<div class="btn" style="left:764px;top:239px;width:58px;height:34px;"></div>
<div class="t" style="left:764px;top:250.8px;width:58px;text-align:center;font-size:10.9px">CMS</div>
<div class="t" style="left:470px;top:288.2px;font-size:11.2px;">R<span class="c">：</span></div>
<div class="a" style="left:498px;top:276px;width:240px;height:34px;background:linear-gradient(90deg,#002eff,#ff2eff)"></div>
<div class="a" style="left:498px;top:276px;width:240px;height:34px;overflow:hidden"><svg style="left:155.0588235294117px;top:0px" width="8" height="34"><path d="M0.5 0H7.5L4 3.5Z" fill="#000"/><path d="M0.5 34H7.5L4 30.5Z" fill="#000"/><path d="M0 0L4 4L8 0" stroke="#fff" stroke-width=".6" fill="none" opacity=".6"/><path d="M0 34L4 30L8 34" stroke="#fff" stroke-width=".6" fill="none" opacity=".6"/></svg></div>
<div class="spin" style="left:746px;top:276px;width:68px;height:34px"><i style="left:32px"></i><i style="left:49px"></i></div>
<div class="t" style="left:749.5px;top:287.2px;font-size:12.6px;">169</div>
<div class="pm" style="left:783.0px;top:292.0px;width:10px;height:2px;background:#2e3436"></div>
<div class="pm" style="left:800.0px;top:292.0px;width:10px;height:2px;background:#2e3436"></div>
<div class="pm" style="left:804.0px;top:288.0px;width:2px;height:10px;background:#2e3436"></div>
<div class="t" style="left:470px;top:324.2px;font-size:11.2px;">G<span class="c">：</span></div>
<div class="a" style="left:498px;top:312px;width:240px;height:34px;background:linear-gradient(90deg,#a900ff,#a9ffff)"></div>
<div class="a" style="left:498px;top:312px;width:240px;height:34px;overflow:hidden"><svg style="left:39.29411764705878px;top:0px" width="8" height="34"><path d="M0.5 0H7.5L4 3.5Z" fill="#000"/><path d="M0.5 34H7.5L4 30.5Z" fill="#000"/><path d="M0 0L4 4L8 0" stroke="#fff" stroke-width=".6" fill="none" opacity=".6"/><path d="M0 34L4 30L8 34" stroke="#fff" stroke-width=".6" fill="none" opacity=".6"/></svg></div>
<div class="spin" style="left:746px;top:312px;width:68px;height:34px"><i style="left:32px"></i><i style="left:49px"></i></div>
<div class="t" style="left:749.5px;top:323.2px;font-size:12.6px;">46</div>
<div class="pm" style="left:783.0px;top:328.0px;width:10px;height:2px;background:#2e3436"></div>
<div class="pm" style="left:800.0px;top:328.0px;width:10px;height:2px;background:#2e3436"></div>
<div class="pm" style="left:804.0px;top:324.0px;width:2px;height:10px;background:#2e3436"></div>
<div class="t" style="left:470px;top:360.2px;font-size:11.2px;">B<span class="c">：</span></div>
<div class="a" style="left:498px;top:348px;width:240px;height:34px;background:linear-gradient(90deg,#a92e00,#a92eff)"></div>
<div class="a" style="left:498px;top:348px;width:240px;height:34px;overflow:hidden"><svg style="left:236.0px;top:0px" width="8" height="34"><path d="M0.5 0H7.5L4 3.5Z" fill="#000"/><path d="M0.5 34H7.5L4 30.5Z" fill="#000"/><path d="M0 0L4 4L8 0" stroke="#fff" stroke-width=".6" fill="none" opacity=".6"/><path d="M0 34L4 30L8 34" stroke="#fff" stroke-width=".6" fill="none" opacity=".6"/></svg></div>
<div class="spin" style="left:746px;top:348px;width:68px;height:34px"><i style="left:32px"></i><i style="left:49px"></i></div>
<div class="t" style="left:749.5px;top:359.2px;font-size:12.6px;">255</div>
<div class="pm" style="left:783.0px;top:364.0px;width:10px;height:2px;background:#2e3436"></div>
<div class="pm" style="left:800.0px;top:364.0px;width:10px;height:2px;background:#d4d2d0"></div>
<div class="pm" style="left:804.0px;top:360.0px;width:2px;height:10px;background:#d4d2d0"></div>
<div class="t" style="left:470px;top:396.2px;font-size:11.2px;">A<span class="c">：</span></div>
<div class="a" style="left:498px;top:384px;width:240px;height:34px;background-color:#999;background-image:linear-gradient(45deg,#666 25%,transparent 25%,transparent 75%,#666 75%),linear-gradient(45deg,#666 25%,transparent 25%,transparent 75%,#666 75%);background-size:16px 16px;background-position:0 0,8px 8px"></div>
<div class="a" style="left:498px;top:384px;width:240px;height:34px;background:linear-gradient(90deg,rgba(169,46,255,0),rgba(169,46,255,1))"></div>
<div class="a" style="left:498px;top:384px;width:240px;height:34px;overflow:hidden"><svg style="left:46.39999999999998px;top:0px" width="8" height="34"><path d="M0.5 0H7.5L4 3.5Z" fill="#000"/><path d="M0.5 34H7.5L4 30.5Z" fill="#000"/><path d="M0 0L4 4L8 0" stroke="#fff" stroke-width=".6" fill="none" opacity=".6"/><path d="M0 34L4 30L8 34" stroke="#fff" stroke-width=".6" fill="none" opacity=".6"/></svg></div>
<div class="spin" style="left:746px;top:384px;width:68px;height:34px"><i style="left:32px"></i><i style="left:49px"></i></div>
<div class="t" style="left:749.5px;top:395.2px;font-size:12.6px;">21</div>
<div class="pm" style="left:783.0px;top:400.0px;width:10px;height:2px;background:#2e3436"></div>
<div class="pm" style="left:800.0px;top:400.0px;width:10px;height:2px;background:#2e3436"></div>
<div class="pm" style="left:804.0px;top:396.0px;width:2px;height:10px;background:#2e3436"></div>
<svg style="left:464px;top:465px" width="16" height="18" viewBox="464 465 16 18"><defs><linearGradient id="cm2" x1="0" y1="0" x2="1" y2=".6"><stop offset="0" stop-color="#c4f0d4"/><stop offset=".45" stop-color="#eef6c8"/><stop offset="1" stop-color="#f6c4dc"/></linearGradient><linearGradient id="cm3" x1="0" y1="0" x2="0" y2="1"><stop offset="0" stop-color="#d8f4c8" stop-opacity=".9"/><stop offset="1" stop-color="#c4d4f6" stop-opacity=".9"/></linearGradient></defs><path d="M465.6 466.4L478.4 475.6L467.6 481.6Z" fill="url(#cm2)"/><path d="M465.6 466.4L470.6 470L469.6 480.4L467.6 481.6Z" fill="url(#cm3)"/><path d="M465.6 466.4L478.4 475.6L467.6 481.6Z" fill="none" stroke="#e4e4e4" stroke-width=".6"/></svg>
<svg style="left:484px;top:466px" width="16" height="16" viewBox="0 0 16 16"><circle cx="8" cy="8.2" r="5.3" fill="#fff" stroke="#f9c6cb" stroke-width="5"/></svg>
<svg style="left:514px;top:463px" width="20" height="22" viewBox="514 463 20 22"><path d="M517.4 481L518.2 478L524 471L526 472.8L520.2 479.8Z" fill="#dfe8f2" stroke="#222" stroke-width=".9"/><path d="M518 480L521 476.4" stroke="#3c6cb0" stroke-width="1"/><circle cx="517.4" cy="481.6" r=".9" fill="#3c6cb0"/><path d="M522.6 470L527.8 474.4" stroke="#111" stroke-width="1.8"/><ellipse cx="527.4" cy="469" rx="2.6" ry="3.6" transform="rotate(40 527.4 469)" fill="#111"/></svg>
<div class="t" style="left:690px;top:467.5px;font-size:12px;">RGBA(:)<span class="c">：</span></div>
<div class="a" style="left:748px;top:457px;width:74px;height:34px;background:#fff;border:1px solid #cdc7c2;border-radius:5px"></div>
<div class="t" style="left:757px;top:467.2px;font-size:12.6px;">a92eff35</div>
<div class="t" style="left:662px;top:514.0px;font-size:12px;">混合模式<span class="c">：</span></div>
<div class="btn" style="left:733px;top:504px;width:88px;height:34px;"></div>
<div class="t" style="left:745px;top:514.5px;font-size:12px;">正常</div>
<svg style="left:798px;top:519px" width="10" height="5"><path d="M0 0H10L5 5Z" fill="#2e3436"/></svg>
<div class="a" style="left:453px;top:546px;width:378px;height:1px;background:#dcd8d4"></div>
<div class="a" style="left:453px;top:555px;width:378px;height:64px;background:#fff;border-radius:0 5px 5px 0"></div>
<div class="a" style="left:453px;top:555px;width:310px;height:32px;background:#e1dedb;border:1px solid #cdc7c2;border-left:2px solid #3584e4;border-radius:3px 3px 3px 0"></div>
<div class="a" style="left:453px;top:587px;width:310px;height:32px;background:#3584e4;border:1px solid #2a76d6;border-radius:0 0 3px 3px"></div>
<div class="t" style="left:458px;top:565.7px;font-size:12px;color:#000;letter-spacing:.3px">模糊(%)</div>
<div class="t" style="left:458px;top:597.7px;font-size:12px;color:#fff;letter-spacing:.3px">不透明度(%)</div>
<div class="t" style="left:765px;top:565.2px;font-size:12.6px;">0.0</div>
<div class="t" style="left:765px;top:597.2px;font-size:12.6px;">100.0</div>
<div class="a" style="left:797px;top:555px;width:1px;height:64px;background:#e4e1de"></div>
<div class="a" style="left:814px;top:555px;width:1px;height:64px;background:#e4e1de"></div>
<div class="pm" style="left:801.0px;top:570px;width:10px;height:2px;background:#d0cecc"></div>
<div class="pm" style="left:818.0px;top:570px;width:10px;height:2px;background:#2e3436"></div>
<div class="pm" style="left:822px;top:566.0px;width:2px;height:10px;background:#2e3436"></div>
<div class="pm" style="left:801.0px;top:602px;width:10px;height:2px;background:#2e3436"></div>
<div class="pm" style="left:818.0px;top:602px;width:10px;height:2px;background:#d4d2d0"></div>
<div class="pm" style="left:822px;top:598.0px;width:2px;height:10px;background:#d4d2d0"></div>
<div class="a" style="left:840px;top:246px;width:36px;height:1px;background:#dcd8d4"></div>
<div class="a" style="left:840px;top:330px;width:36px;height:1px;background:#dcd8d4"></div>
<div class="a" style="left:840px;top:414px;width:36px;height:1px;background:#dcd8d4"></div>
<div class="a" style="left:840px;top:533px;width:36px;height:1px;background:#dcd8d4"></div>
<div class="a" style="left:884px;top:141px;width:36px;height:1px;background:#dcd8d4"></div>
<div class="a" style="left:884px;top:330px;width:36px;height:1px;background:#dcd8d4"></div>
<div class="a" style="left:884px;top:554px;width:36px;height:1px;background:#dcd8d4"></div>
<div class="act" style="left:884px;top:100px;width:35px;height:34px;"></div>
<div class="act" style="left:884px;top:338px;width:35px;height:34px;"></div>
<div class="act" style="left:884px;top:443px;width:35px;height:34px;"></div>
<div class="act" style="left:884px;top:562px;width:35px;height:34px;"></div>
<svg style="left:856px;top:618px" width="6" height="9"><path d="M0 0V9L5.5 4.5Z" fill="#2e3436"/></svg>
<svg style="left:900px;top:618px" width="6" height="9"><path d="M0 0V9L5.5 4.5Z" fill="#2e3436"/></svg>
<svg style="left:848px;top:106px" width="22" height="22" viewBox="848 106 22 22"><path d="M851.5 109.5H859.5L863 113V124.5H851.5Z" fill="#fdfdfd" stroke="#c9c9c9" stroke-width="1"/><path d="M859.5 109.5V113H863" fill="#eee" stroke="#c9c9c9" stroke-width=".8"/><circle cx="862.3" cy="118" r="3.9" fill="#1c4e9e"/><path d="M860 118H864.6M862.3 115.7V120.3" stroke="#fff" stroke-width="1.3"/></svg>
<svg style="left:848px;top:142px" width="22" height="22" viewBox="848 142 22 22"><path d="M850.5 146.5Q850.5 145.5 851.5 145.5H856.5L858 147H864.5Q865.5 147 865.5 148V158Q865.5 159 864.5 159H851.5Q850.5 159 850.5 158Z" fill="#d2b48c" stroke="#b89b72" stroke-width=".8"/><rect x="854.5" y="148.5" width="9" height="5.5" fill="#fff" stroke="#8a8a8a" stroke-width=".7"/><path d="M856 150.5H862" stroke="#bbb" stroke-width=".8"/><path d="M850.8 158.6L852.6 153.6Q853 153 854 153L866 152.6V158Q866 159 865 159H851.5Z" fill="#e3c9a3" stroke="#c2a67c" stroke-width=".6"/></svg>
<svg style="left:848px;top:176px" width="22" height="22" viewBox="848 176 22 22"><path d="M856.3 179.5H860.3V186.5H863L858.3 191L853.6 186.5H856.3Z" fill="#fff" stroke="#555" stroke-width=".9"/><path d="M852.5 187.5H855L858.3 190.8L861.6 187.5H864.5V194.5H852.5Z" fill="#3c7bd0" stroke="#2a5fa8" stroke-width=".8"/><rect x="855" y="191.5" width="7" height="1.4" fill="#1f4c8e"/></svg>
<svg style="left:848px;top:211px" width="22" height="22" viewBox="848 211 22 22"><rect x="850.5" y="214.5" width="15" height="10" rx="1.5" fill="#3a3a3a" stroke="#222" stroke-width=".8"/><rect x="853.5" y="216.5" width="9" height="2.5" fill="#aaa"/><rect x="853" y="221.5" width="10.5" height="7.5" fill="#fff" stroke="#333" stroke-width=".9"/><path d="M855 224.5H861M855 226.5H859" stroke="#7c7" stroke-width=".8"/></svg>
<svg style="left:847px;top:260px" width="24" height="22" viewBox="847 260 24 22"><defs><linearGradient id="dg" x1="0" y1="0" x2="1" y2="1"><stop offset="0" stop-color="#fafafa"/><stop offset="1" stop-color="#d6d6d6"/></linearGradient></defs><path d="M854.5 263.5H862L866 267.5V278.5H854.5Z" fill="url(#dg)" stroke="#111" stroke-width="1"/><path d="M862 263.5V267.5H866" fill="none" stroke="#111" stroke-width=".9"/><path d="M849.5 271.5H857.5" stroke="#000" stroke-width="1.2"/><path d="M857 268.6L860.4 271.5L857 274.4Z" fill="#000"/></svg>
<svg style="left:847px;top:295px" width="24" height="22" viewBox="847 295 24 22"><path d="M850.5 298.5H858L862 302.5V313.5H850.5Z" fill="url(#dg)" stroke="#111" stroke-width="1"/><path d="M858 298.5V302.5H862" fill="none" stroke="#111" stroke-width=".9"/><path d="M856 306.5H864" stroke="#000" stroke-width="1.2"/><path d="M863 303.6L866.6 306.5L863 309.4Z" fill="#000"/></svg>
<svg style="left:847px;top:346px" width="24" height="18" viewBox="847 346 24 18"><path d="M850 353.6L856.2 349.6V352.2H861.5Q866.2 352.4 866.2 356.6Q866 360.6 861 360.8H856.5V358.6H860.6Q863.4 358.4 863.4 356.6Q863.4 355 860.8 355H856.2V357.6Z" fill="#f5c211" stroke="#b8860b" stroke-width=".8" stroke-linejoin="round"/></svg>
<svg style="left:847px;top:381px" width="24" height="18" viewBox="847 381 24 18"><path d="M866.4 388.2L860.2 384.2V386.8H854.9Q850.2 387 850.2 391.2Q850.4 395.2 855.4 395.4H859.9V393.2H855.8Q853 393 853 391.2Q853 389.6 855.6 389.6H860.2V392.2Z" fill="#e4f1e2" stroke="#c8dcc6" stroke-width=".8" stroke-linejoin="round"/></svg>
<svg style="left:847px;top:429px" width="22" height="20" viewBox="847 429 22 20"><rect x="850" y="431.5" width="10.5" height="10" fill="#fdfdfd" stroke="#777" stroke-width=".9"/><path d="M852 434H858.5M852 436H858.5M852 438H857" stroke="#999" stroke-width=".8"/><rect x="855.5" y="436.5" width="10.5" height="10" fill="#fdfdfd" stroke="#777" stroke-width=".9"/><path d="M857.5 439H864M857.5 441H864M857.5 443H862" stroke="#999" stroke-width=".8"/></svg>
<svg style="left:847px;top:463px" width="22" height="22" viewBox="847 463 22 22"><path d="M851.4 466L859.4 476.4L857.6 477.4Z" fill="#e8e8e8" stroke="#888" stroke-width=".7"/><path d="M864.4 466L856.4 476.4L858.2 477.4Z" fill="#f4f4f4" stroke="#888" stroke-width=".7"/><circle cx="853.6" cy="478.6" r="2.4" fill="#fff" stroke="#d01818" stroke-width="2"/><circle cx="862.2" cy="478.6" r="2.4" fill="#fff" stroke="#d01818" stroke-width="2"/></svg>
<svg style="left:847px;top:498px" width="22" height="22" viewBox="847 498 22 22"><rect x="850" y="502.5" width="14.5" height="14.5" rx="1.2" fill="#d89a4e" stroke="#8a5a1e" stroke-width=".9"/><rect x="854.5" y="500.8" width="5.5" height="3.4" rx="1" fill="#ddd" stroke="#555" stroke-width=".8"/><rect x="855.5" y="507" width="10" height="10" fill="#fafafa" stroke="#666" stroke-width=".9"/><path d="M857.5 510H863.5M857.5 512H863.5M857.5 514H862" stroke="#999" stroke-width=".8"/></svg>
<svg style="left:847px;top:548px" width="22" height="22" viewBox="847 548 22 22"><circle cx="857.4" cy="557.6" r="6.8" fill="#f4f6f8" stroke="#222" stroke-width="1.5"/><rect x="853.6" y="554.2" width="7.6" height="6.6" fill="none" stroke="#222" stroke-width="1" stroke-dasharray="1.2 1.2"/><path d="M862.6 563L866 566.4" stroke="#111" stroke-width="2.6" stroke-linecap="round"/></svg>
<svg style="left:888px;top:100px" width="28" height="34" viewBox="888 100 28 34"><path d="M898.3 113.39999999999999L903.8 118.8" stroke="#000" stroke-width="1.3"/><path d="M905.4 120.5L900.4 118.6L903.4 115.6Z" fill="#000"/><rect x="894.6999999999999" y="109.7" width="4.2" height="4.2" fill="#c9c9ff" stroke="#2a2aff" stroke-width="1.4" transform="rotate(45 896.8 111.8)"/><rect x="904.6999999999999" y="119.9" width="4.2" height="4.2" fill="#b9c4d8" stroke="#2e8b2e" stroke-width="1.4" transform="rotate(45 906.8 122)"/></svg>
<svg style="left:888px;top:149px" width="28" height="34" viewBox="888 149 28 34"><path d="M898.3 162.4L903.8 167.8" stroke="#000" stroke-width="1.3"/><path d="M905.4 169.5L900.4 167.6L903.4 164.6Z" fill="#000"/><rect x="894.6999999999999" y="158.70000000000002" width="4.2" height="4.2" fill="#c9c9ff" stroke="#2a2aff" stroke-width="1.4" transform="rotate(45 896.8 160.8)"/><rect x="904.6999999999999" y="168.9" width="4.2" height="4.2" fill="#b9c4d8" stroke="#2e8b2e" stroke-width="1.4" transform="rotate(45 906.8 171)"/></svg>
<svg style="left:888px;top:338px" width="28" height="34" viewBox="888 338 28 34"><path d="M898.3 351.40000000000003L903.8 356.8" stroke="#000" stroke-width="1.3"/><path d="M905.4 358.5L900.4 356.6L903.4 353.6Z" fill="#000"/><rect x="894.6999999999999" y="347.7" width="4.2" height="4.2" fill="#c9c9ff" stroke="#2a2aff" stroke-width="1.4" transform="rotate(45 896.8 349.8)"/><rect x="904.6999999999999" y="357.9" width="4.2" height="4.2" fill="#b9c4d8" stroke="#2e8b2e" stroke-width="1.4" transform="rotate(45 906.8 360)"/></svg>
<svg style="left:888px;top:562px" width="28" height="34" viewBox="888 562 28 34"><path d="M898.3 575.4L903.8 580.8" stroke="#000" stroke-width="1.3"/><path d="M905.4 582.5L900.4 580.6L903.4 577.6Z" fill="#000"/><rect x="894.6999999999999" y="571.6999999999999" width="4.2" height="4.2" fill="#c9c9ff" stroke="#2a2aff" stroke-width="1.4" transform="rotate(45 896.8 573.8)"/><rect x="904.6999999999999" y="581.9" width="4.2" height="4.2" fill="#b9c4d8" stroke="#2e8b2e" stroke-width="1.4" transform="rotate(45 906.8 584)"/></svg>
<svg style="left:888px;top:188px" width="28" height="24" viewBox="888 188 28 24"><path d="M907.2 193.6V206.6" stroke="#dcdcd6" stroke-width="1.3" stroke-dasharray="1.3 1.3"/><path d="M894.5 206.2H907.5" stroke="#dcdcd6" stroke-width="1.3" stroke-dasharray="1.3 1.3"/></svg>
<svg style="left:888px;top:224px" width="28" height="24" viewBox="888 224 28 24"><path d="M907.2 228.8V241.8" stroke="#dcdcd6" stroke-width="1.3" stroke-dasharray="1.3 1.3"/><path d="M894.5 241.4H907.5" stroke="#dcdcd6" stroke-width="1.3" stroke-dasharray="1.3 1.3"/><rect x="905.4" y="239.6" width="3.6" height="3.6" fill="#e2ece0" stroke="#cfe0cc" stroke-width="1" transform="rotate(45 907.2 241.4)"/></svg>
<svg style="left:888px;top:259px" width="28" height="24" viewBox="888 259 28 24"><path d="M907.2 263.8V276.8" stroke="#dcdcd6" stroke-width="1.3" stroke-dasharray="1.3 1.3"/><path d="M894.5 276.40000000000003H907.5" stroke="#dcdcd6" stroke-width="1.3" stroke-dasharray="1.3 1.3"/><rect x="905.4" y="265.6" width="3.6" height="3.6" fill="#e2ece0" stroke="#cfe0cc" stroke-width="1" transform="rotate(45 907.2 267.4)"/></svg>
<svg style="left:888px;top:294px" width="28" height="24" viewBox="888 294 28 24"><path d="M907.2 298.4V311.4" stroke="#dcdcd6" stroke-width="1.3" stroke-dasharray="1.3 1.3"/><path d="M894.5 311.0H907.5" stroke="#dcdcd6" stroke-width="1.3" stroke-dasharray="1.3 1.3"/><circle cx="897.9" cy="302.5" r="1.9" fill="#eef4ec" stroke="#cfe0cc" stroke-width="1"/></svg>
<svg style="left:888px;top:380px" width="28" height="22" viewBox="888 380 28 22"><path d="M894.5 384C900 384.5 903.5 388 904 396.2C907 395.6 908.6 393.4 909.2 390.4" fill="none" stroke="#1c8c1c" stroke-width="1.8" stroke-linecap="round" stroke-linejoin="round"/></svg>
<svg style="left:888px;top:414px" width="28" height="22" viewBox="888 414 28 22"><path d="M894.5 431.8L909.2 417.8M894.5 426.6L909.2 422.2" stroke="#333" stroke-width="1"/><circle cx="901.8" cy="424.8" r="1.9" fill="#7fc07f" stroke="#1c7c1c" stroke-width="1.2"/></svg>
<svg style="left:888px;top:448px" width="28" height="24" viewBox="888 448 28 24"><path d="M894.5 452.6C902 453 908 456 908.8 460C908 463 905 465.4 901.8 465.4" fill="none" stroke="#555" stroke-width="1.1"/><rect x="899.9" y="463.3" width="3.8" height="3.8" fill="#b9d8b9" stroke="#2e8b2e" stroke-width="1.3" transform="rotate(45 901.8 465.2)"/></svg>
<svg style="left:888px;top:484px" width="28" height="22" viewBox="888 484 28 22"><path d="M894.5 488.2L901.5 490.4C901.5 495 903 498 904.4 499.4C906.6 498.6 908.4 497 909.2 494.8" fill="none" stroke="#444" stroke-width="1.1"/><rect x="899.6" y="488.6" width="3.8" height="3.8" fill="#9ab" stroke="#2e8b2e" stroke-width="1.3"/></svg>
<svg style="left:888px;top:518px" width="28" height="24" viewBox="888 518 28 24"><path d="M894.5 536.8L909.2 523.2" stroke="#555" stroke-width="1"/><path d="M896.2 532L897.4 538.4M898.4 530.2L899.6 536.6M904.2 524.6L905.4 531M906.4 522.6L907.6 529" stroke="#d01818" stroke-width="1.1"/><circle cx="901.8" cy="530" r="1.9" fill="#7fc07f" stroke="#1c7c1c" stroke-width="1.2"/></svg>
<div class="a" style="left:8px;top:642px;width:880px;height:21px;background:#fff"></div>
<svg style="left:8px;top:642px" width="19" height="21"><rect width="19" height="21" fill="#fff"/><path d="M0.5 0.5L18.5 20.5M18.5 0.5L0.5 20.5" stroke="#8b1a1a" stroke-width="1.6"/></svg>
<div class="a" style="left:27px;top:642px;width:19px;height:21px;background:#000000"></div>
<div class="a" style="left:46px;top:642px;width:19px;height:21px;background:#1a1a1a"></div>
<div class="a" style="left:65px;top:642px;width:19px;height:21px;background:#333333"></div>
<div class="a" style="left:84px;top:642px;width:19px;height:21px;background:#4d4d4d"></div>
<div class="a" style="left:103px;top:642px;width:19px;height:21px;background:#666666"></div>
<div class="a" style="left:122px;top:642px;width:19px;height:21px;background:#808080"></div>
<div class="a" style="left:141px;top:642px;width:19px;height:21px;background:#999999"></div>
<div class="a" style="left:160px;top:642px;width:19px;height:21px;background:#b3b3b3"></div>
<div class="a" style="left:179px;top:642px;width:19px;height:21px;background:#cccccc"></div>
<div class="a" style="left:198px;top:642px;width:19px;height:21px;background:#e6e6e6"></div>
<div class="a" style="left:217px;top:642px;width:19px;height:21px;background:#ececec"></div>
<div class="a" style="left:236px;top:642px;width:19px;height:21px;background:#f2f2f2"></div>
<div class="a" style="left:255px;top:642px;width:19px;height:21px;background:#f9f9f9"></div>
<div class="a" style="left:274px;top:642px;width:19px;height:21px;background:#ffffff"></div>
<div class="a" style="left:293px;top:642px;width:19px;height:21px;background:#800000"></div>
<div class="a" style="left:312px;top:642px;width:19px;height:21px;background:#ff0000"></div>
<div class="a" style="left:331px;top:642px;width:19px;height:21px;background:#808000"></div>
<div class="a" style="left:350px;top:642px;width:19px;height:21px;background:#ffff00"></div>
<div class="a" style="left:369px;top:642px;width:19px;height:21px;background:#008000"></div>
<div class="a" style="left:388px;top:642px;width:19px;height:21px;background:#00ff00"></div>
<div class="a" style="left:407px;top:642px;width:19px;height:21px;background:#008080"></div>
<div class="a" style="left:426px;top:642px;width:19px;height:21px;background:#00ffff"></div>
<div class="a" style="left:445px;top:642px;width:19px;height:21px;background:#000080"></div>
<div class="a" style="left:464px;top:642px;width:19px;height:21px;background:#0000ff"></div>
<div class="a" style="left:483px;top:642px;width:19px;height:21px;background:#800080"></div>
<div class="a" style="left:502px;top:642px;width:19px;height:21px;background:#ff00ff"></div>
<div class="a" style="left:521px;top:642px;width:19px;height:21px;background:#2b0000"></div>
<div class="a" style="left:540px;top:642px;width:19px;height:21px;background:#550000"></div>
<div class="a" style="left:559px;top:642px;width:19px;height:21px;background:#800000"></div>
<div class="a" style="left:578px;top:642px;width:19px;height:21px;background:#aa0000"></div>
<div class="a" style="left:597px;top:642px;width:19px;height:21px;background:#d40000"></div>
<div class="a" style="left:616px;top:642px;width:19px;height:21px;background:#ff0000"></div>
<div class="a" style="left:635px;top:642px;width:19px;height:21px;background:#ff2a2a"></div>
<div class="a" style="left:654px;top:642px;width:19px;height:21px;background:#ff5555"></div>
<div class="a" style="left:673px;top:642px;width:19px;height:21px;background:#ff8080"></div>
<div class="a" style="left:692px;top:642px;width:19px;height:21px;background:#ffaaaa"></div>
<div class="a" style="left:711px;top:642px;width:19px;height:21px;background:#ffd5d5"></div>
<div class="a" style="left:730px;top:642px;width:19px;height:21px;background:#280b0b"></div>
<div class="a" style="left:749px;top:642px;width:19px;height:21px;background:#501616"></div>
<div class="a" style="left:768px;top:642px;width:19px;height:21px;background:#782121"></div>
<div class="a" style="left:787px;top:642px;width:19px;height:21px;background:#a02c2c"></div>
<div class="a" style="left:806px;top:642px;width:19px;height:21px;background:#c83737"></div>
<div class="a" style="left:825px;top:642px;width:19px;height:21px;background:#d35f5f"></div>
<div class="a" style="left:844px;top:642px;width:19px;height:21px;background:#de8787"></div>
<div class="a" style="left:863px;top:642px;width:19px;height:21px;background:#e9afaf"></div>
<div class="a" style="left:882px;top:642px;width:6px;height:21px;background:#f4d7d7"></div>
<svg style="left:903px;top:654.5px" width="6" height="9"><path d="M6 0V9L0.5 4.5Z" fill="#2e3436"/></svg>
<div class="a" style="left:9px;top:663px;width:879px;height:13px;background:#cfcfcf"></div>
<div class="a" style="left:11px;top:667px;width:88px;height:6px;background:#7f8282;border-radius:3px"></div>
<div class="t" style="left:10px;top:678px;font-size:12px;">填充<span class="c">：</span></div>
<div class="t" style="left:10px;top:693.5px;font-size:12px;">笔刷<span class="c">：</span></div>
<div class="a" style="left:50px;top:676px;width:16px;height:16px;background-color:#cbb6e4;background-image:linear-gradient(45deg,#b898d8 25%,transparent 25%,transparent 75%,#b898d8 75%),linear-gradient(45deg,#b898d8 25%,transparent 25%,transparent 75%,#b898d8 75%);background-size:12px 12px;background-position:0 0,6px 6px;border-radius:2px 0 0 2px"></div>
<div class="a" style="left:66px;top:676px;width:16px;height:16px;background:#a92eff;border-radius:0 2px 2px 0"></div>
<div class="t b" style="left:50px;top:693.5px;font-size:12px;">未设</div>
<div class="t" style="left:80px;top:695.5px;font-size:12px;">0.265</div>
<div class="t" style="left:115px;top:688px;font-size:12.5px;">O<span class="c">：</span></div>
<div class="spin" style="left:137px;top:677px;width:67px;height:33px"><i style="left:33px"></i><i style="left:50px"></i></div>
<div class="t" style="left:140.5px;top:687.7px;font-size:12.6px;">100</div>
<div class="pm" style="left:175.0px;top:692.5px;width:10px;height:2px;background:#2e3436"></div>
<div class="pm" style="left:191.0px;top:692.5px;width:10px;height:2px;background:#d4d2d0"></div>
<div class="pm" style="left:195.0px;top:688.5px;width:2px;height:10px;background:#d4d2d0"></div>
<svg style="left:216px;top:682px" width="24" height="20" viewBox="216 682 24 20"><path d="M219.4 693.4Q227.3 685.6 235.2 693.4Q227.3 701.4 219.4 693.4Z" fill="#fff" stroke="#111" stroke-width="1.3"/><circle cx="227.2" cy="693.4" r="3.3" fill="#111"/><circle cx="226" cy="692.2" r=".9" fill="#ddd"/><path d="M219.4 689L221.8 691M223 686L224.4 689.4M227.4 685V688.8M231.8 686.2L230.4 689.4M235 689.2L232.8 691" stroke="#111" stroke-width="1.2"/></svg>
<svg style="left:254px;top:682px" width="20" height="22" viewBox="254 682 20 22"><path d="M259.4 686.6Q262.6 684.2 265.6 686Q267.6 687.6 268 691.4" fill="none" stroke="#111" stroke-width="1.4"/><path d="M257.2 692.6L267.8 690.4L269.6 698.4L259 700.8Z" fill="#f5e08a" stroke="#111" stroke-width="1.2" stroke-linejoin="round"/><path d="M258.6 693.6L263 692.6L264 699L259.8 699.8Z" fill="#fdf8dc"/><circle cx="263.4" cy="694.6" r="1.1" fill="#111"/><path d="M263.4 694.6L263.9 697.4" stroke="#111" stroke-width="1.1"/></svg>
<div class="btn" style="left:282px;top:676px;width:76px;height:34px;"></div>
<div class="t b" style="left:293px;top:687px;font-size:11.5px;letter-spacing:.3px">·图层 1</div>
<svg style="left:336px;top:691px" width="10" height="5"><path d="M0 0H10L5 5Z" fill="#2e3436"/></svg>
<div class="t" style="left:361px;top:681px;font-size:12px;"><b style="letter-spacing:.3px">Ctrl</b><span class="c">：</span>制作圆或整数比率的椭圆，</div>
<div class="t" style="left:361px;top:694.5px;font-size:12px;letter-spacing:.1px">吸附弧/线段的角度</div>
<div class="a" style="left:539px;top:677px;width:1px;height:32px;background:#dcd8d4"></div>
<div class="t" style="left:551px;top:678.5px;font-size:12.4px;">X<span class="c">：</span></div>
<div class="t" style="left:552.5px;top:695.5px;font-size:12.4px;">Y<span class="c">：</span></div>
<div class="t" style="left:570px;top:678.5px;width:54px;text-align:right;font-size:12.6px">235.10</div>
<div class="t" style="left:570px;top:695.5px;width:54px;text-align:right;font-size:12.6px">311.45</div>
<div class="t" style="left:634px;top:687.5px;font-size:12.5px;">Z<span class="c">：</span></div>
<div class="a" style="left:663.5px;top:676px;width:93px;height:34px;background:#fff;border:1px solid #cdc7c2;border-radius:5px"></div>
<div class="a" style="left:712px;top:677px;width:1px;height:32px;background:#e4e1de"></div>
<div class="a" style="left:733px;top:677px;width:1px;height:32px;background:#e4e1de"></div>
<div class="t" style="left:676px;top:686.7px;font-size:12.6px;">35%</div>
<div class="pm" style="left:718.0px;top:692px;width:10px;height:2px;background:#2e3436"></div>
<div class="pm" style="left:738.5px;top:692px;width:10px;height:2px;background:#2e3436"></div>
<div class="pm" style="left:742.5px;top:688.0px;width:2px;height:10px;background:#2e3436"></div>
<div class="t" style="left:767px;top:687.0px;font-size:12px;">旋转<span class="c">：</span></div>
<div class="a" style="left:814px;top:676px;width:100px;height:34px;background:#fff;border:1px solid #cdc7c2;border-radius:5px"></div>
<div class="a" style="left:869px;top:677px;width:1px;height:32px;background:#e4e1de"></div>
<div class="a" style="left:890px;top:677px;width:1px;height:32px;background:#e4e1de"></div>
<div class="t" style="left:830px;top:686.7px;font-size:12.6px;">0.00°</div>
<div class="pm" style="left:875.0px;top:692px;width:10px;height:2px;background:#2e3436"></div>
<div class="pm" style="left:896.5px;top:692px;width:10px;height:2px;background:#2e3436"></div>
<div class="pm" style="left:900.5px;top:688.0px;width:2px;height:10px;background:#2e3436"></div>
</body></html>
